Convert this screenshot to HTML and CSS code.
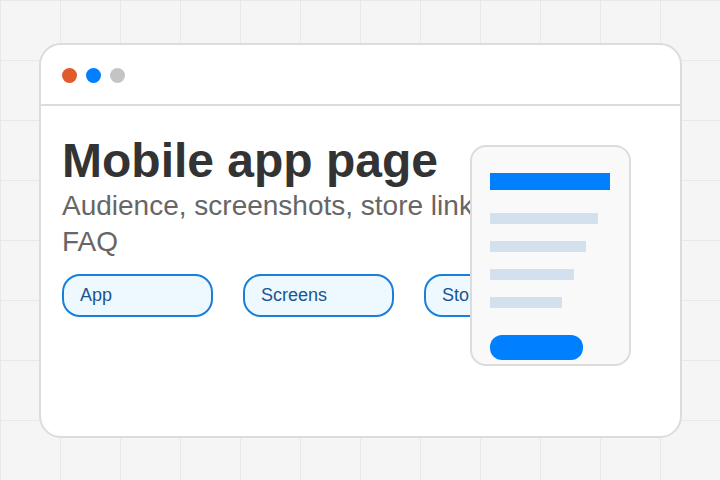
FILE: index.html
```html
<!DOCTYPE html>
<html lang="en">
<head>
<meta charset="utf-8">
<title>Mobile app page</title>
<link rel="stylesheet" href="styles.css">
</head>
<body>
<div class="window">
  <div class="titlebar">
    <span class="dot dot-red"></span>
    <span class="dot dot-blue"></span>
    <span class="dot dot-gray"></span>
  </div>
  <div class="content">
    <h1 class="title">Mobile app page</h1>
    <p class="subtitle">Audience, screenshots, store links, FAQ</p>
    <div class="pills">
      <span class="pill">App</span>
      <span class="pill">Screens</span>
      <span class="pill">Store</span>
    </div>
  </div>
  <div class="phone">
    <div class="phone-bar"></div>
    <div class="phone-lines">
      <div class="phone-line" style="width:90%"></div>
      <div class="phone-line" style="width:80%"></div>
      <div class="phone-line" style="width:70%"></div>
      <div class="phone-line" style="width:60%"></div>
    </div>
    <div class="phone-btn"></div>
  </div>
</div>
</body>
</html>
```

FILE: styles.css
```css
* { box-sizing: border-box; }
html, body { margin: 0; padding: 0; }
body {
  width: 720px;
  height: 480px;
  overflow: hidden;
  font-family: "Liberation Sans", Arial, sans-serif;
  background-color: #f5f5f5;
  background-image:
    linear-gradient(to right, #e8e8e8 1px, transparent 1px),
    linear-gradient(to bottom, #e8e8e8 1px, transparent 1px);
  background-size: 60px 60px;
  padding: 43px 38px 0 39px;
}
.window {
  position: relative;
  width: 643px;
  height: 395px;
  background: #ffffff;
  border: 2px solid #dcdcdc;
  border-radius: 22px;
  overflow: hidden;
}
.titlebar {
  height: 61px;
  border-bottom: 2px solid #dcdcdc;
  display: flex;
  align-items: center;
  gap: 9px;
  padding: 2px 0 0 21px;
}
.dot {
  width: 15px;
  height: 15px;
  border-radius: 50%;
}
.dot-red { background: #e05a2b; }
.dot-blue { background: #0080ff; }
.dot-gray { background: #c4c4c4; }
.content {
  padding: 27px 0 0 21px;
}
.title {
  margin: 0;
  font-size: 48px;
  line-height: 55px;
  font-weight: 700;
  color: #333333;
}
.subtitle {
  margin: 0;
  max-width: 450px;
  font-size: 28px;
  line-height: 36px;
  color: #666666;
}
.pills {
  display: flex;
  gap: 30px;
  margin-top: 14px;
}
.pill {
  flex: none;
  width: 151px;
  height: 43px;
  border: 2px solid #1a7fd9;
  border-radius: 18px;
  background: #eef8ff;
  color: #1a5590;
  font-size: 18px;
  display: flex;
  align-items: center;
  padding-left: 16px;
}
.phone {
  position: absolute;
  left: 429px;
  top: 100px;
  width: 161px;
  height: 221px;
  background: #f9f9f9;
  border: 2px solid #dcdcdc;
  border-radius: 16px;
  padding: 26px 19px 0 18px;
}
.phone-bar {
  height: 17px;
  background: #0080ff;
}
.phone-lines {
  display: flex;
  flex-direction: column;
  gap: 17px;
  margin-top: 23px;
}
.phone-line {
  height: 11px;
  background: #d3e1ee;
}
.phone-btn {
  margin-top: 27px;
  width: 93px;
  height: 25px;
  border-radius: 12px;
  background: #0080ff;
}
```
